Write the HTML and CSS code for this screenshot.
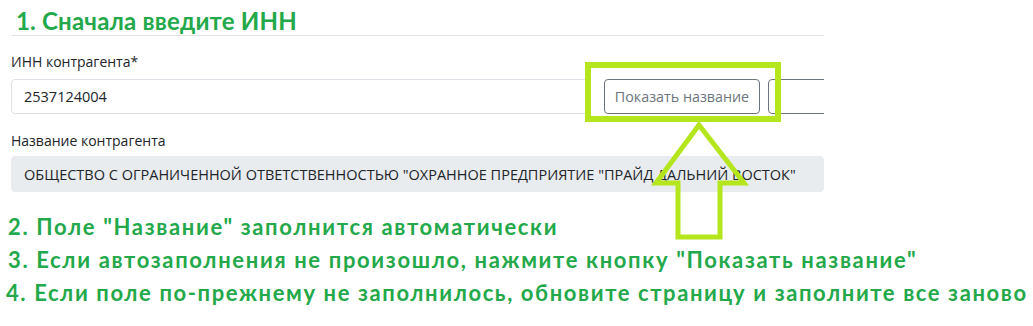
FILE: index.html
```html
<!DOCTYPE html>
<html lang="ru">

<head>
    <meta charset="utf-8">
    <meta name="viewport" content="width=device-width, initial-scale=1.0">
    <title>ИНН контрагента</title>
    <link rel="stylesheet" href="styles.css">
</head>

<body>
    <div id="page">

        <!-- шаг 1 -->
        <div class="step-title">1. Сначала введите ИНН</div>
        <div class="divider"></div>

        <div id="form">
            <label class="form-label" for="inn">ИНН контрагента*</label>
            <div class="form-row">
                <input type="text" id="inn" class="form-input" value="2537124004">
                <button class="btn-outline">Показать название</button>
                <button class="btn-outline btn-cut"></button>
            </div>

            <label class="form-label label-name" for="name">Название контрагента</label>
            <div class="form-input form-readonly" id="name">ОБЩЕСТВО С ОГРАНИЧЕННОЙ ОТВЕТСТВЕННОСТЬЮ "ОХРАННОЕ ПРЕДПРИЯТИЕ "ПРАЙД ДАЛЬНИЙ ВОСТОК"</div>
        </div>

        <!-- подсказки -->
        <div id="notes">
            <p class="note">2. Поле "Название" заполнится автоматически</p>
            <p class="note">3. Если автозаполнения не произошло, нажмите кнопку "Показать название"</p>
            <p class="note note-last">4. Если поле по-прежнему не заполнилось, обновите страницу и заполните все заново</p>
        </div>

        <!-- выделение кнопки и стрелка -->
        <div class="mark-box"></div>
        <svg class="mark-arrow" width="100" height="124" viewBox="0 0 100 124">
            <polygon points="49,4 6,62 28,62 28,116 70,116 70,62 94,62" fill="none" stroke="#b5e61d" stroke-width="5" stroke-linejoin="miter"/>
        </svg>
    </div>
</body>

</html>
```

FILE: styles.css
```css
/* базовые стили */
body {
    margin: 0;
    background-color: #ffffff;
    font-family: "Open Sans", "Noto Sans", sans-serif;
}

#page {
    position: relative;
    width: 1033px;
    height: 326px;
    overflow: hidden;
}

/* заголовок шага */
.step-title {
    padding: 8px 0 0 16px;
    font-family: Lato, "Noto Sans", sans-serif;
    font-weight: bold;
    font-size: 24px;
    line-height: 26px;
    letter-spacing: 0.2px;
    color: #23a84a;
}

.divider {
    margin: 1px 0 0 12px;
    width: 812px;
    height: 1px;
    background-color: #e3e3e3;
}

/* форма */
#form {
    width: 813px;
    margin-left: 11px;
    overflow: hidden;
}

.form-label {
    display: block;
    margin-top: 16px;
    font-size: 14px;
    line-height: 20px;
    color: #212529;
}

.label-name {
    margin-top: 17px;
}

.form-row {
    display: flex;
    margin-top: 7px;
    gap: 16px;
}

.form-input {
    flex: none;
    box-sizing: border-box;
    width: 577px;
    height: 35px;
    padding: 0 12px;
    border: 1px solid #dee2e6;
    border-radius: 4px;
    font-family: inherit;
    font-size: 14.5px;
    color: #212529;
}

.btn-outline {
    flex: none;
    box-sizing: border-box;
    width: 156px;
    height: 35px;
    padding: 0;
    background: #ffffff;
    border: 1px solid #6c757d;
    border-radius: 4px;
    font-family: inherit;
    font-size: 14.3px;
    color: #6c757d;
}

.btn-cut {
    width: 120px;
    margin-left: -8px;
}

.form-readonly {
    display: flex;
    align-items: center;
    width: 813px;
    height: 36px;
    margin-top: 5px;
    background-color: #e9ecef;
    border-color: #e9ecef;
    white-space: nowrap;
}

/* подсказки */
#notes {
    margin: 18px 0 0 8px;
}

.note {
    margin: 0;
    font-family: Lato, "Noto Sans", sans-serif;
    font-weight: bold;
    font-size: 22px;
    line-height: 33px;
    letter-spacing: 1.65px;
    color: #23a84a;
    white-space: nowrap;
}

.note-last {
    margin-left: -2px;
    letter-spacing: 1.6px;
}

/* выделение (поверх контента) */
.mark-box {
    position: absolute;
    left: 585px;
    top: 62px;
    width: 184px;
    height: 48px;
    border: 6px solid #b5e61d;
}

.mark-arrow {
    position: absolute;
    left: 650px;
    top: 121px;
}
```
